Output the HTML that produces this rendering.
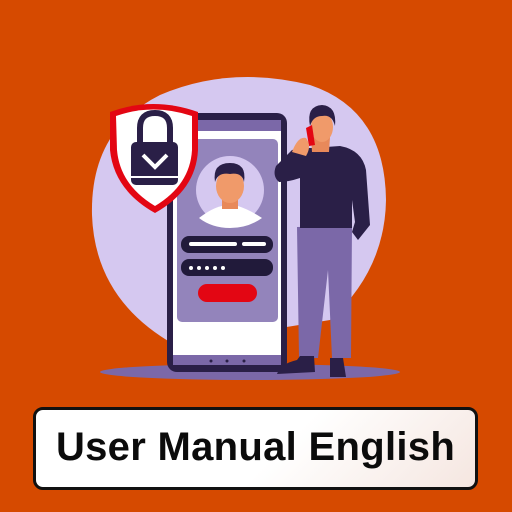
<!DOCTYPE html>
<html><head><style>
html,body{margin:0;padding:0;width:512px;height:512px;overflow:hidden;background:#d64a00}
.box{position:absolute;left:33px;top:407px;width:439px;height:77px;border:3px solid #111;border-radius:10px;background:linear-gradient(135deg,#fff 55%,#f5e6e0);}
.t{position:absolute;left:33px;top:406px;width:445px;height:83px;display:flex;align-items:center;justify-content:center;font-family:"Liberation Sans",sans-serif;font-weight:bold;font-size:40px;color:#0b0b0b;letter-spacing:0.3px}
</style></head><body>
<svg width="512" height="512" style="position:absolute;left:0;top:0">
<path d="M92 215 Q90 130 160 95 Q230 65 310 85 Q385 110 386 200 Q385 270 330 320 L175 345 Q95 300 92 215Z" fill="#d5c8f0"/>
<ellipse cx="250" cy="372" rx="150" ry="8" fill="#7b68a8"/>
<!-- phone -->
<rect x="167" y="113" width="120" height="259" rx="10" fill="#2a1f47"/>
<rect x="173" y="120" width="108" height="245" rx="3" fill="#fff"/>
<rect x="173" y="120" width="108" height="11" fill="#7b68a8"/>
<rect x="173" y="355" width="108" height="10" fill="#7b68a8"/>
<rect x="177" y="139" width="101" height="183" rx="5" fill="#9384bb"/>
<circle cx="230" cy="190" r="34" fill="#d5c8f0"/>
<path d="M199 218 Q212 208 222 206 L238 206 Q250 210 262 218 Q248 228 230 228 Q212 228 199 218Z" fill="#fff"/>
<rect x="222" y="195" width="16" height="14" fill="#e8895a"/>
<ellipse cx="230" cy="186" rx="14" ry="17" fill="#f09a6a"/>
<path d="M215 182 Q212 163 230 163 Q247 163 244 182 Q242 172 230 174 Q218 172 215 182Z" fill="#2a1f47"/>
<rect x="181" y="236" width="92" height="17" rx="8" fill="#211a3a"/>
<rect x="189" y="242" width="48" height="4" rx="2" fill="#fff"/>
<rect x="242" y="242" width="24" height="4" rx="2" fill="#fff"/>
<rect x="181" y="259" width="92" height="17" rx="8" fill="#211a3a"/>
<g fill="#fff"><circle cx="191" cy="268" r="2"/><circle cx="199" cy="268" r="2"/><circle cx="207" cy="268" r="2"/><circle cx="215" cy="268" r="2"/><circle cx="223" cy="268" r="2"/></g>
<rect x="198" y="284" width="59" height="18" rx="9" fill="#e30613"/>
<g fill="#2a1f47"><circle cx="211" cy="361" r="1.5"/><circle cx="227" cy="361" r="1.5"/><circle cx="244" cy="361" r="1.5"/></g>
<!-- shield -->
<path d="M110 112 Q153 96 198 112 L198 150 Q196 190 155 213 Q114 190 110 150Z" fill="#e30613"/>
<path d="M116 116 Q153 103 192 116 L192 150 Q190 185 155 206 Q120 185 117 150Z" fill="#fff"/>
<path d="M140 143 L140 128 Q140 113 155 113 Q170 113 170 128 L170 143" fill="none" stroke="#2a1f47" stroke-width="6"/>
<rect x="131" y="142" width="47" height="43" rx="5" fill="#2a1f47"/>
<path d="M143 155 L155 167 L167 155" fill="none" stroke="#fff" stroke-width="4"/>
<rect x="131" y="176" width="47" height="2" fill="#fff"/>
<!-- man -->
<path d="M297 227 L352 226 L351 358 L332 358 L328 270 L318 358 L299 358Z" fill="#7b68a8"/>
<path d="M330 358 L343 358 L346 377 L330 377Z" fill="#2a1f47"/>
<path d="M300 356 L314 356 L315 372 L277 374 Q280 364 297 360Z" fill="#2a1f47"/>
<path d="M312 148 L340 146 Q362 150 366 170 L370 225 L358 240 L352 232 L355 222 L352 200 L352 228 L300 228 L300 178 Q288 182 279 182 Q272 176 276 166 L292 150 L300 148Z" fill="#2a1f47"/>
<path d="M311 137 L330 137 L329 152 L312 152Z" fill="#e8895a"/>
<ellipse cx="322" cy="127" rx="11" ry="15" fill="#f09a6a"/>
<path d="M310 126 Q306 106 322 105 Q337 106 335 126 Q332 114 322 116 Q313 116 310 126Z" fill="#2a1f47"/>
<path d="M306 128 L312 125 L315 145 L309 146Z" fill="#e30613"/>
<path d="M292 152 Q298 136 306 138 Q312 146 306 156Z" fill="#f09a6a"/>
</svg>
<div class="box"></div>
<div class="t">User Manual English</div>
</body></html>
